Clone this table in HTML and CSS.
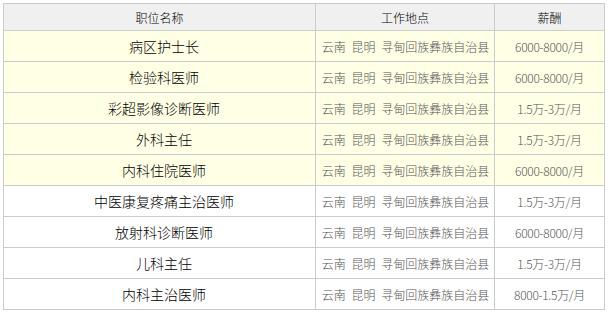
FILE: index.html
```html
<!DOCTYPE html>
<html lang="zh-CN">
<head>
<meta charset="utf-8">
<title>职位列表</title>
<link rel="stylesheet" href="styles.css">
</head>
<body>
<table class="jobs">
  <colgroup>
    <col class="c-name">
    <col class="c-place">
    <col class="c-pay">
  </colgroup>
  <thead>
    <tr><th>职位名称</th><th>工作地点</th><th>薪酬</th></tr>
  </thead>
  <tbody>
    <tr class="hl"><td class="name">病区护士长</td><td class="place">云南 昆明 寻甸回族彝族自治县</td><td class="pay">6000-8000/月</td></tr>
    <tr class="hl"><td class="name">检验科医师</td><td class="place">云南 昆明 寻甸回族彝族自治县</td><td class="pay">6000-8000/月</td></tr>
    <tr class="hl"><td class="name">彩超影像诊断医师</td><td class="place">云南 昆明 寻甸回族彝族自治县</td><td class="pay">1.5万-3万/月</td></tr>
    <tr class="hl"><td class="name">外科主任</td><td class="place">云南 昆明 寻甸回族彝族自治县</td><td class="pay">1.5万-3万/月</td></tr>
    <tr class="hl"><td class="name">内科住院医师</td><td class="place">云南 昆明 寻甸回族彝族自治县</td><td class="pay">6000-8000/月</td></tr>
    <tr><td class="name">中医康复疼痛主治医师</td><td class="place">云南 昆明 寻甸回族彝族自治县</td><td class="pay">1.5万-3万/月</td></tr>
    <tr><td class="name">放射科诊断医师</td><td class="place">云南 昆明 寻甸回族彝族自治县</td><td class="pay">6000-8000/月</td></tr>
    <tr><td class="name">儿科主任</td><td class="place">云南 昆明 寻甸回族彝族自治县</td><td class="pay">1.5万-3万/月</td></tr>
    <tr><td class="name">内科主治医师</td><td class="place">云南 昆明 寻甸回族彝族自治县</td><td class="pay">8000-1.5万/月</td></tr>
  </tbody>
</table>
</body>
</html>
```
FILE: styles.css
```css
html, body {
  margin: 0;
  padding: 0;
  background: #ffffff;
}
body {
  padding: 3px;
  font-family: "Noto Sans CJK SC", "Noto Sans", sans-serif;
}
.jobs {
  width: 602px;
  table-layout: fixed;
  border-collapse: separate;
  border-spacing: 0;
  border-left: 1px solid #cccccc;
  border-top: 1px solid #cccccc;
}
.c-name { width: 312px; }
.c-place { width: 179px; }
.c-pay { width: 110px; }
.jobs th,
.jobs td {
  box-sizing: border-box;
  padding: 0;
  border-right: 1px solid #cccccc;
  border-bottom: 1px solid #cccccc;
  text-align: center;
  vertical-align: middle;
  white-space: nowrap;
  overflow: hidden;
  font-weight: 300;
}
.jobs th {
  height: 27px;
  background: #f0f0f0;
  font-size: 12px;
  color: #000000;
}
.jobs td {
  height: 31px;
}
.jobs tr.hl td {
  background: #ffffe6;
}
.jobs td.name {
  font-size: 14px;
  color: #000000;
  padding-left: 9px;
}
.jobs td.place,
.jobs td.pay {
  font-size: 12px;
  color: #555555;
}
.jobs td.place {
  padding-left: 1px;
  word-spacing: 3px;
}
.jobs td.pay {
  letter-spacing: -0.3px;
}
```
